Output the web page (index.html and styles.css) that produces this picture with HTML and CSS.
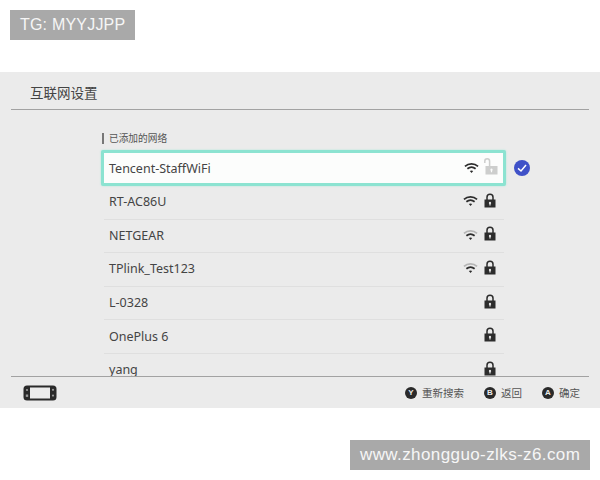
FILE: index.html
```html
<!DOCTYPE html>
<html lang="zh-CN">
<head>
    <meta charset="UTF-8">
    <title>互联网设置</title>
    <link rel="stylesheet" href="styles.css">
</head>
<body>
    <svg class="defs" width="0" height="0">
        <symbol id="wifi" viewBox="0 0 16 12">
            <path class="arc" d="M1 4.2C5 .6 11 .6 15 4.2" />
            <path class="arc" d="M3.6 6.8C6.2 4.6 9.8 4.6 12.4 6.8" />
            <path class="arc-dot" d="M6.2 9.3C7.3 8.5 8.7 8.5 9.8 9.3L8 11.2Z" />
        </symbol>
        <symbol id="wifi-weak" viewBox="0 0 16 12">
            <path class="arc faint" d="M1 4.2C5 .6 11 .6 15 4.2" />
            <path class="arc" d="M3.6 6.8C6.2 4.6 9.8 4.6 12.4 6.8" />
            <path class="arc-dot" d="M6.2 9.3C7.3 8.5 8.7 8.5 9.8 9.3L8 11.2Z" />
        </symbol>
        <symbol id="lock" viewBox="0 0 12 15">
            <path class="shackle" d="M3 7V4.2C3 2.4 4.2 1.2 6 1.2S9 2.4 9 4.2V7" />
            <path class="body-lock" fill-rule="evenodd" d="M.5 6.4H11.5V14.6H.5ZM6 8.8A1.2 1.2 0 0 0 5.4 11V12.6H6.6V11A1.2 1.2 0 0 0 6 8.8Z" />
        </symbol>
        <symbol id="lock-open" viewBox="0 0 14 17">
            <path class="shackle" d="M.8 5V3.2C.8 1.8 1.8 .8 3.2 .8S5.6 1.8 5.6 3.2V8" />
            <path class="body-lock" fill-rule="evenodd" d="M1.5 8H13.5V16.5H1.5ZM7.5 10.5A1.2 1.2 0 0 0 6.9 12.7V14.2H8.1V12.7A1.2 1.2 0 0 0 7.5 10.5Z" />
        </symbol>
    </svg>

    <div class="tag tag-top">TG: MYYJJPP</div>

    <div class="screen">
        <div class="header"><h1>互联网设置</h1></div>

        <div class="main">
            <div class="list">
                <div class="section-label">已添加的网络</div>

                <div class="row selected">
                    <span class="name">Tencent-StaffWiFi</span>
                    <svg class="wifi"><use href="#wifi" /></svg>
                    <svg class="lock open"><use href="#lock-open" /></svg>
                    <span class="check">
                        <svg viewBox="0 0 16 16"><path d="M4 8.4L7 11L12 5" /></svg>
                    </span>
                </div>
                <div class="row">
                    <span class="name">RT-AC86U</span>
                    <svg class="wifi"><use href="#wifi" /></svg>
                    <svg class="lock"><use href="#lock" /></svg>
                </div>
                <div class="row">
                    <span class="name">NETGEAR</span>
                    <svg class="wifi"><use href="#wifi-weak" /></svg>
                    <svg class="lock"><use href="#lock" /></svg>
                </div>
                <div class="row">
                    <span class="name">TPlink_Test123</span>
                    <svg class="wifi"><use href="#wifi-weak" /></svg>
                    <svg class="lock"><use href="#lock" /></svg>
                </div>
                <div class="row">
                    <span class="name">L-0328</span>
                    <svg class="lock"><use href="#lock" /></svg>
                </div>
                <div class="row">
                    <span class="name">OnePlus 6</span>
                    <svg class="lock"><use href="#lock" /></svg>
                </div>
                <div class="row">
                    <span class="name">yang</span>
                    <svg class="lock"><use href="#lock" /></svg>
                </div>
            </div>
        </div>

        <div class="footer">
            <svg class="console" viewBox="0 0 34 16">
                <rect x="0.5" y="0.5" width="33" height="15" rx="3.5" />
                <rect class="console-screen" x="7" y="2.5" width="20" height="11" />
                <circle class="console-btn" cx="4" cy="5" r="1.1" />
                <rect class="console-btn" x="2.8" y="9.5" width="2.4" height="2.4" />
                <circle class="console-btn" cx="30" cy="4.8" r="1.1" />
                <circle class="console-btn" cx="30" cy="10.6" r="1.1" />
            </svg>
            <div class="actions">
                <span class="action"><b class="btn">Y</b>重新搜索</span>
                <span class="action"><b class="btn">B</b>返回</span>
                <span class="action"><b class="btn">A</b>确定</span>
            </div>
        </div>
    </div>

    <div class="tag tag-bottom">www.zhongguo-zlks-z6.com</div>
</body>
</html>
```

FILE: styles.css
```css
body {
    margin: 0;
    background: white;
    font-family: "Liberation Sans", "Noto Sans CJK SC", sans-serif;
    overflow: hidden;
}
.defs {
    position: absolute;
}
.tag {
    height: 30px;
    line-height: 30px;
    background: #a9a9a9;
    color: #f6f6f6;
    font-size: 16px;
    letter-spacing: 0.2px;
    box-sizing: border-box;
    padding: 0 10px;
    white-space: nowrap;
}
.tag-top {
    width: 125px;
    margin: 10px 0 32px 10px;
}
.tag-bottom {
    width: 240px;
    margin: 32px 0 0 350px;
    font-size: 17px;
    letter-spacing: 0.4px;
}
.screen {
    height: 336px;
    background: #ebebeb;
    display: flex;
    flex-direction: column;
    color: #3a3a3a;
}
.header {
    height: 37px;
    margin: 0 11px;
    border-bottom: 1px solid #a2a2a2;
    display: flex;
    align-items: center;
    padding-left: 19px;
    flex-shrink: 0;
}
.header h1 {
    margin: 2px 0 0;
    font-size: 13.5px;
    font-weight: normal;
    color: #444;
}
.main {
    height: 266px;
    overflow: hidden;
    flex-shrink: 0;
}
.list {
    width: 405px;
    margin-left: 101px;
}
.section-label {
    height: 40px;
    box-sizing: border-box;
    padding-top: 23px;
    padding-left: 8px;
    font-size: 9.7px;
    line-height: 12px;
    color: #555;
    position: relative;
}
.section-label::before {
    content: "";
    position: absolute;
    left: 1px;
    top: 23px;
    width: 2px;
    height: 11px;
    background: #777;
}
.row {
    height: 33.6px;
    box-sizing: border-box;
    margin: 0 2px 0 3px;
    padding: 0 0 1px 5px;
    border-bottom: 1px solid #dfdfdf;
    display: flex;
    align-items: center;
    gap: 6px;
    position: relative;
}
.name {
    flex: 1;
    font-size: 12.5px;
    color: #444;
    font-family: "Noto Sans", sans-serif;
}
.selected {
    height: 36px;
    margin: 0;
    padding: 0 0 0 5px;
    background: #fcfdfc;
    border: 3px solid #8ce3d1;
    border-radius: 2px;
    box-shadow: 0 0 2px #a8e8da;
}
.wifi {
    width: 15px;
    height: 12px;
    margin-top: -1px;
}
.arc {
    fill: none;
    stroke: #2c2c2c;
    stroke-width: 1.8;
}
.faint {
    stroke: #b5b5b5;
}
.arc-dot {
    fill: #2c2c2c;
}
.lock {
    width: 12px;
    height: 15px;
    margin: -3px 8px 0 0;
}
.shackle {
    fill: none;
    stroke: #2c2c2c;
    stroke-width: 1.5;
}
.body-lock {
    fill: #2c2c2c;
}
.open {
    width: 14px;
    height: 17px;
    margin: -3px 5px 0 -1px;
    opacity: 0.22;
}
.check {
    position: absolute;
    right: -27px;
    top: 7px;
    width: 16px;
    height: 16px;
    border-radius: 50%;
    background: #3f51c8;
}
.check svg {
    display: block;
    fill: none;
    stroke: white;
    stroke-width: 1.5;
}
.footer {
    flex: 1;
    margin: 0 11px;
    border-top: 1px solid #a2a2a2;
    display: flex;
    align-items: center;
    justify-content: space-between;
    padding: 0 9px 0 12px;
}
.console {
    width: 34px;
    height: 16px;
    fill: #2a2a2a;
}
.console-screen {
    fill: #ebebeb;
}
.console-btn {
    fill: #9a9a9a;
}
.actions {
    display: flex;
    gap: 20px;
}
.action {
    display: flex;
    align-items: center;
    gap: 5px;
    font-size: 10.5px;
    color: #555;
}
.btn {
    width: 12px;
    height: 12px;
    border-radius: 50%;
    background: #2a2a2a;
    color: #ebebeb;
    font-size: 8px;
    line-height: 12px;
    text-align: center;
}
```
